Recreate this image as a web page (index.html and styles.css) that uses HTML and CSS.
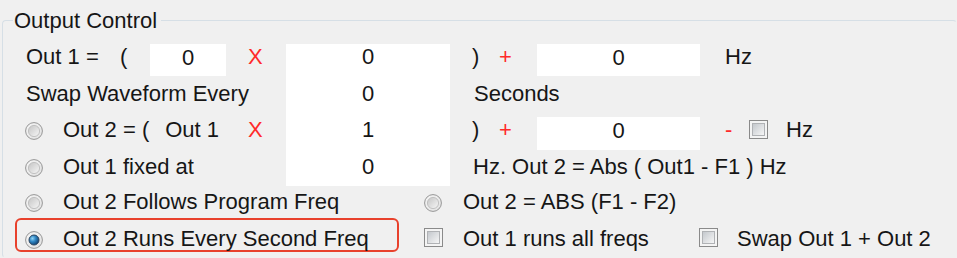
FILE: index.html
```html
<!DOCTYPE html>
<html>
<head>
<meta charset="utf-8">
<link rel="stylesheet" href="styles.css">
</head>
<body>
<svg class="defs" width="0" height="0" aria-hidden="true">
  <defs>
    <linearGradient id="rgIn" x1="0" y1="0" x2="1" y2="1">
      <stop offset="0" stop-color="#c4c4c4"/>
      <stop offset="1" stop-color="#f7f7f7"/>
    </linearGradient>
    <linearGradient id="rgOut" x1="0" y1="0" x2="1" y2="1">
      <stop offset="0" stop-color="#f6f6f6"/>
      <stop offset="1" stop-color="#e0e0e0"/>
    </linearGradient>
    <radialGradient id="dot" cx="0.35" cy="0.35" r="0.7">
      <stop offset="0" stop-color="#8fd3f5"/>
      <stop offset="0.45" stop-color="#2f86c4"/>
      <stop offset="1" stop-color="#0f3f6e"/>
    </radialGradient>
    <linearGradient id="cbIn" x1="0" y1="0" x2="1" y2="1">
      <stop offset="0" stop-color="#c2c6cb"/>
      <stop offset="1" stop-color="#f8f8f8"/>
    </linearGradient>
    <symbol id="radio" viewBox="0 0 18 18">
      <circle cx="9" cy="9" r="8.4" fill="url(#rgOut)" stroke="#969696" stroke-width="1"/>
      <circle cx="9" cy="9" r="5.6" fill="url(#rgIn)" stroke="#b8b8b8" stroke-width="0.8"/>
    </symbol>
    <symbol id="radioOn" viewBox="0 0 18 18">
      <circle cx="9" cy="9" r="8.4" fill="url(#rgOut)" stroke="#969696" stroke-width="1"/>
      <circle cx="9" cy="9" r="5" fill="url(#dot)" stroke="#2b4560" stroke-width="1"/>
    </symbol>
    <symbol id="check" viewBox="0 0 19 19">
      <rect x="0.5" y="0.5" width="18" height="18" fill="#f4f4f4" stroke="#8a8a8a"/>
      <rect x="3.5" y="3.5" width="12" height="12" fill="url(#cbIn)" stroke="#b0b2b5"/>
    </symbol>
  </defs>
</svg>

<fieldset class="group">
  <legend class="legend">Output Control</legend>

  <div class="grid-a">
    <div class="bigbox"></div>

    <!-- row 1 -->
    <span class="t r1 c-lab pl1">Out 1 =</span>
    <span class="t r1 c-paren">(</span>
    <div class="box r1 c-box1">0</div>
    <span class="t r1 c-x red">X</span>
    <span class="t r1 c-big ctr">0</span>
    <span class="t r1 c-cparen">)</span>
    <span class="t r1 c-plus red">+</span>
    <div class="box r1 c-box3">0</div>
    <span class="t r1 c-hz">Hz</span>

    <!-- row 2 -->
    <span class="t r2 c-lab-long pl1">Swap Waveform Every</span>
    <span class="t r2 c-big ctr">0</span>
    <span class="t r2 c-after">Seconds</span>

    <!-- row 3 -->
    <span class="t r3 c-lab-long"><svg class="radio"><use href="#radio"/></svg>Out 2 = (<span class="sub">Out 1</span></span>
    <span class="t r3 c-x red">X</span>
    <span class="t r3 c-big ctr">1</span>
    <span class="t r3 c-cparen">)</span>
    <span class="t r3 c-plus red">+</span>
    <div class="box tall r3 c-box3">0</div>
    <span class="t r3 c-minus red">-</span>
    <span class="t r3 c-cb"><svg class="check"><use href="#check"/></svg></span>
    <span class="t r3 c-hz2">Hz</span>

    <!-- row 4 -->
    <span class="t r4 c-lab-long"><svg class="radio"><use href="#radio"/></svg>Out 1 fixed at</span>
    <span class="t r4 c-big ctr">0</span>
    <span class="t r4 c-after-long">Hz. Out 2 = Abs ( Out1 - F1 ) Hz</span>
  </div>

  <div class="grid-b">
    <span class="t b1 pl12"><svg class="radio"><use href="#radio"/></svg>Out 2 Follows Program Freq</span>
    <span class="t b2"><svg class="radio r-wide"><use href="#radio"/></svg>Out 2 = ABS (F1 - F2)</span>

    <div class="highlight"><svg class="radio"><use href="#radioOn"/></svg>Out 2 Runs Every Second Freq</div>
    <span class="t b2"><svg class="check lo"><use href="#check"/></svg>Out 1 runs all freqs</span>
    <span class="t b3"><svg class="check lo narrow"><use href="#check"/></svg>Swap Out 1 + Out 2</span>
  </div>
</fieldset>
</body>
</html>
```

FILE: styles.css
```css
html, body {
  margin: 0;
  padding: 0;
}
body {
  background: #f0f0f0;
  width: 957px;
  height: 258px;
  overflow: hidden;
  font-family: "Liberation Sans", Arial, sans-serif;
  font-size: 22px;
  color: #161616;
}
.defs {
  display: block;
  width: 0;
  height: 0;
  overflow: hidden;
}
.group {
  margin: 8px 0 0 2px;
  padding: 6px 0 0 10px;
  border: 1px solid #d6dfe6;
  border-right-color: transparent;
  border-bottom-color: transparent;
  border-radius: 4px;
  width: 955px;
  height: 250px;
  box-sizing: border-box;
  min-width: 0;
  overflow: hidden;
}
.legend {
  padding: 0 4px 0 1px;
  line-height: 25px;
  margin: 0;
}

.grid-a {
  display: grid;
  grid-template-columns: 12px 97px 28px 76px 22px 38px 164px 22px 28px 37px 163px 25px 24px 37px 1fr;
  grid-template-rows: 37px 36px 37px 35px;
}
.grid-b {
  display: grid;
  grid-template-columns: 411px 275px 1fr;
  grid-template-rows: 37px 37px;
}

.t {
  line-height: 36px;
  white-space: nowrap;
  align-self: start;
}
.r1 { grid-row: 1; }
.r2 { grid-row: 2; }
.r3 { grid-row: 3; }
.r4 { grid-row: 4; }

.c-lab { grid-column: 2 / 3; }
.c-lab-long { grid-column: 2 / 7; }
.c-paren { grid-column: 3 / 4; margin-left: -2px; }
.c-box1 { grid-column: 4 / 5; }
.c-x { grid-column: 6 / 7; }
.c-big { grid-column: 7 / 8; }
.c-cparen { grid-column: 9 / 10; }
.c-plus { grid-column: 10 / 11; margin-left: -1px; }
.c-box3 { grid-column: 11 / 12; }
.c-hz { grid-column: 13 / 16; }
.c-minus { grid-column: 13 / 14; }
.c-cb { grid-column: 14 / 15; }
.c-hz2 { grid-column: 15 / 16; }
.c-after { grid-column: 9 / 13; padding-left: 2px; }
.c-after-long { grid-column: 9 / 16; padding-left: 1px; }

.pl1 { padding-left: 1px; }
.pl12 { padding-left: 12px; }
.ctr { text-align: center; }
.red { color: #ff2a2a; }

.bigbox {
  grid-column: 7 / 8;
  grid-row: 1 / 5;
  background: #ffffff;
  margin: 5px 0 -2px 0;
}
.box {
  background: #ffffff;
  margin-top: 5px;
  height: 32px;
  line-height: 27px;
  text-align: center;
  align-self: start;
}
.box.tall { height: 33px; }

.sub { margin-left: 16px; }

.radio {
  width: 18px;
  height: 18px;
  vertical-align: -3px;
  margin-right: 20px;
}
.radio.r-wide { margin-right: 21px; }
.check {
  width: 19px;
  height: 19px;
  vertical-align: -2px;
}
.check.lo { vertical-align: -1px; margin-right: 20px; }
.check.lo.narrow { margin-right: 19px; }

.b1 { grid-column: 1; grid-row: 1; }
.b2 { grid-column: 2; }
.b3 { grid-column: 3; }

.highlight {
  grid-column: 1;
  grid-row: 2;
  margin: -3px 0 0 2px;
  width: 384px;
  height: 34px;
  box-sizing: border-box;
  border: 2px solid #e8412c;
  border-radius: 6px;
  padding: 6px 0 0 8px;
  line-height: 26px;
  white-space: nowrap;
}
```
